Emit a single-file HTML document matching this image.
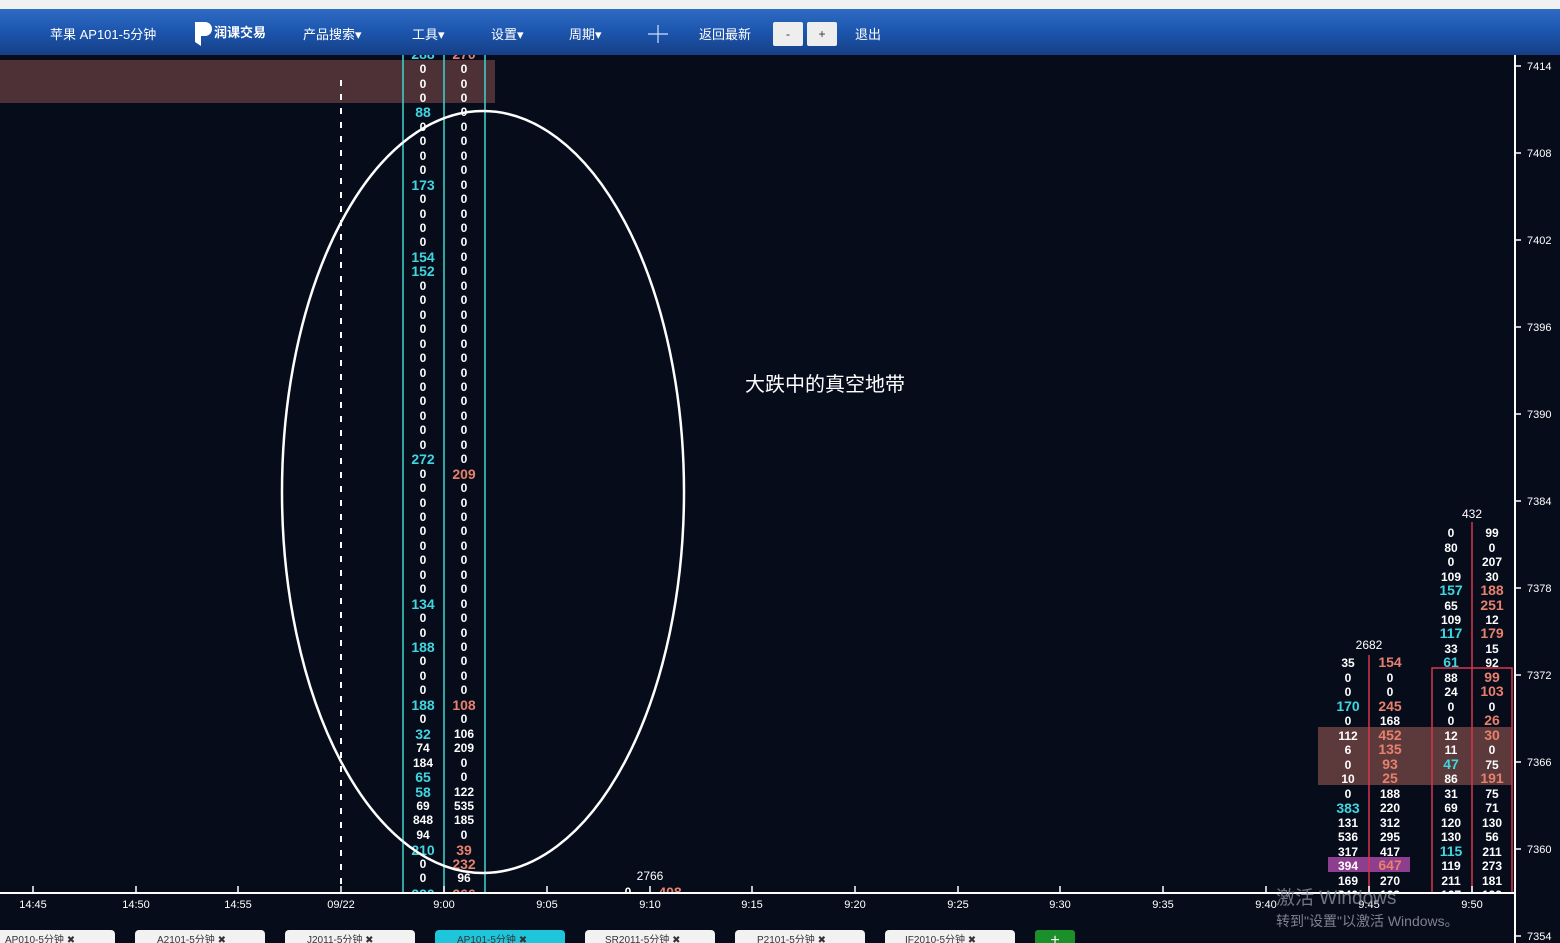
<!DOCTYPE html>
<html><head><meta charset="utf-8"><style>
*{margin:0;padding:0}
body{width:1560px;height:943px;overflow:hidden;background:#070c1b;font-family:"Liberation Sans","Noto Sans CJK SC",sans-serif}
svg{display:block}
.w{fill:#fff;font-size:12px;font-weight:bold;text-anchor:middle}
.c{fill:#3fd6e0;font-size:14px;font-weight:bold;text-anchor:middle}
.r{fill:#e8806c;font-size:14px;font-weight:bold;text-anchor:middle}
.t{fill:#fff;font-size:11px;text-anchor:middle}
.p{fill:#fff;font-size:11px}
.m{fill:#fff;font-size:13px}
</style></head><body>
<svg width="1560" height="943" xmlns="http://www.w3.org/2000/svg">
<defs><linearGradient id="g" x1="0" y1="0" x2="0" y2="1"><stop offset="0" stop-color="#2f6cc4"/><stop offset="0.5" stop-color="#1c55ad"/><stop offset="1" stop-color="#163f86"/></linearGradient></defs>

<rect x="0" y="60" width="495" height="43" fill="#4d3136"/>
<rect x="1318" y="727" width="194" height="58" fill="#7a4a48" opacity="0.75"/>
<rect x="1328" y="857" width="82" height="15" fill="#8e3e8e"/>
<line x1="341" y1="80" x2="341" y2="893" stroke="#fff" stroke-width="2" stroke-dasharray="6,8"/>
<g stroke="#3fd6d0" stroke-width="1.5"><line x1="403" y1="55" x2="403" y2="893"/><line x1="444" y1="55" x2="444" y2="893"/><line x1="485" y1="55" x2="485" y2="893"/></g>
<g stroke="#d8344a" stroke-width="1.5" fill="none"><line x1="1369" y1="655" x2="1369" y2="893"/><line x1="1472" y1="522" x2="1472" y2="893"/><rect x="1432" y="668" width="80" height="225"/></g>

<g transform="translate(0,1)">
<text class="c" x="423" y="58">288</text><text class="r" x="464" y="58">270</text>
<text class="w" x="423" y="72">0</text><text class="w" x="464" y="72">0</text>
<text class="w" x="423" y="87">0</text><text class="w" x="464" y="87">0</text>
<text class="w" x="423" y="101">0</text><text class="w" x="464" y="101">0</text>
<text class="c" x="423" y="116">88</text><text class="w" x="464" y="115">0</text>
<text class="w" x="423" y="130">0</text><text class="w" x="464" y="130">0</text>
<text class="w" x="423" y="144">0</text><text class="w" x="464" y="144">0</text>
<text class="w" x="423" y="159">0</text><text class="w" x="464" y="159">0</text>
<text class="w" x="423" y="173">0</text><text class="w" x="464" y="173">0</text>
<text class="c" x="423" y="189">173</text><text class="w" x="464" y="188">0</text>
<text class="w" x="423" y="202">0</text><text class="w" x="464" y="202">0</text>
<text class="w" x="423" y="217">0</text><text class="w" x="464" y="217">0</text>
<text class="w" x="423" y="231">0</text><text class="w" x="464" y="231">0</text>
<text class="w" x="423" y="245">0</text><text class="w" x="464" y="245">0</text>
<text class="c" x="423" y="261">154</text><text class="w" x="464" y="260">0</text>
<text class="c" x="423" y="275">152</text><text class="w" x="464" y="274">0</text>
<text class="w" x="423" y="289">0</text><text class="w" x="464" y="289">0</text>
<text class="w" x="423" y="303">0</text><text class="w" x="464" y="303">0</text>
<text class="w" x="423" y="318">0</text><text class="w" x="464" y="318">0</text>
<text class="w" x="423" y="332">0</text><text class="w" x="464" y="332">0</text>
<text class="w" x="423" y="347">0</text><text class="w" x="464" y="347">0</text>
<text class="w" x="423" y="361">0</text><text class="w" x="464" y="361">0</text>
<text class="w" x="423" y="376">0</text><text class="w" x="464" y="376">0</text>
<text class="w" x="423" y="390">0</text><text class="w" x="464" y="390">0</text>
<text class="w" x="423" y="404">0</text><text class="w" x="464" y="404">0</text>
<text class="w" x="423" y="419">0</text><text class="w" x="464" y="419">0</text>
<text class="w" x="423" y="433">0</text><text class="w" x="464" y="433">0</text>
<text class="w" x="423" y="448">0</text><text class="w" x="464" y="448">0</text>
<text class="c" x="423" y="463">272</text><text class="w" x="464" y="462">0</text>
<text class="w" x="423" y="477">0</text><text class="r" x="464" y="478">209</text>
<text class="w" x="423" y="491">0</text><text class="w" x="464" y="491">0</text>
<text class="w" x="423" y="506">0</text><text class="w" x="464" y="506">0</text>
<text class="w" x="423" y="520">0</text><text class="w" x="464" y="520">0</text>
<text class="w" x="423" y="534">0</text><text class="w" x="464" y="534">0</text>
<text class="w" x="423" y="549">0</text><text class="w" x="464" y="549">0</text>
<text class="w" x="423" y="563">0</text><text class="w" x="464" y="563">0</text>
<text class="w" x="423" y="578">0</text><text class="w" x="464" y="578">0</text>
<text class="w" x="423" y="592">0</text><text class="w" x="464" y="592">0</text>
<text class="c" x="423" y="608">134</text><text class="w" x="464" y="607">0</text>
<text class="w" x="423" y="621">0</text><text class="w" x="464" y="621">0</text>
<text class="w" x="423" y="636">0</text><text class="w" x="464" y="636">0</text>
<text class="c" x="423" y="651">188</text><text class="w" x="464" y="650">0</text>
<text class="w" x="423" y="664">0</text><text class="w" x="464" y="664">0</text>
<text class="w" x="423" y="679">0</text><text class="w" x="464" y="679">0</text>
<text class="w" x="423" y="693">0</text><text class="w" x="464" y="693">0</text>
<text class="c" x="423" y="709">188</text><text class="r" x="464" y="709">108</text>
<text class="w" x="423" y="722">0</text><text class="w" x="464" y="722">0</text>
<text class="c" x="423" y="738">32</text><text class="w" x="464" y="737">106</text>
<text class="w" x="423" y="751">74</text><text class="w" x="464" y="751">209</text>
<text class="w" x="423" y="766">184</text><text class="w" x="464" y="766">0</text>
<text class="c" x="423" y="781">65</text><text class="w" x="464" y="780">0</text>
<text class="c" x="423" y="796">58</text><text class="w" x="464" y="795">122</text>
<text class="w" x="423" y="809">69</text><text class="w" x="464" y="809">535</text>
<text class="w" x="423" y="823">848</text><text class="w" x="464" y="823">185</text>
<text class="w" x="423" y="838">94</text><text class="w" x="464" y="838">0</text>
<text class="c" x="423" y="854">210</text><text class="r" x="464" y="854">39</text>
<text class="w" x="423" y="867">0</text><text class="r" x="464" y="868">232</text>
<text class="w" x="423" y="881">0</text><text class="w" x="464" y="881">96</text>
<text class="c" x="423" y="898">220</text><text class="r" x="464" y="898">266</text>
</g>

<ellipse cx="483" cy="492" rx="201" ry="381" fill="none" stroke="#fff" stroke-width="2.5"/>
<text x="745" y="391" fill="#fff" font-size="20">大跌中的真空地带</text>
<text class="w" x="650" y="880" style="font-weight:normal">2766</text>
<text class="w" x="628" y="896">0</text><text class="r" x="670" y="897">408</text>

<text class="w" x="1369" y="649" style="font-weight:normal">2682</text>
<g transform="translate(0,1)">
<text class="w" x="1348" y="666">35</text><text class="r" x="1390" y="666">154</text>
<text class="w" x="1348" y="681">0</text><text class="w" x="1390" y="681">0</text>
<text class="w" x="1348" y="695">0</text><text class="w" x="1390" y="695">0</text>
<text class="c" x="1348" y="710">170</text><text class="r" x="1390" y="710">245</text>
<text class="w" x="1348" y="724">0</text><text class="w" x="1390" y="724">168</text>
<text class="w" x="1348" y="739">112</text><text class="r" x="1390" y="739">452</text>
<text class="w" x="1348" y="753">6</text><text class="r" x="1390" y="753">135</text>
<text class="w" x="1348" y="768">0</text><text class="r" x="1390" y="768">93</text>
<text class="w" x="1348" y="782">10</text><text class="r" x="1390" y="782">25</text>
<text class="w" x="1348" y="797">0</text><text class="w" x="1390" y="797">188</text>
<text class="c" x="1348" y="812">383</text><text class="w" x="1390" y="811">220</text>
<text class="w" x="1348" y="826">131</text><text class="w" x="1390" y="826">312</text>
<text class="w" x="1348" y="840">536</text><text class="w" x="1390" y="840">295</text>
<text class="w" x="1348" y="855">317</text><text class="w" x="1390" y="855">417</text>
<text class="w" x="1348" y="869">394</text><text class="r" x="1390" y="869">647</text>
<text class="w" x="1348" y="884">169</text><text class="w" x="1390" y="884">270</text>
<text class="w" x="1348" y="898">240</text><text class="w" x="1390" y="898">163</text>
</g>
<text class="w" x="1472" y="518" style="font-weight:normal">432</text>
<g transform="translate(0,1)">
<text class="w" x="1451" y="536">0</text><text class="w" x="1492" y="536">99</text>
<text class="w" x="1451" y="551">80</text><text class="w" x="1492" y="551">0</text>
<text class="w" x="1451" y="565">0</text><text class="w" x="1492" y="565">207</text>
<text class="w" x="1451" y="580">109</text><text class="w" x="1492" y="580">30</text>
<text class="c" x="1451" y="594">157</text><text class="r" x="1492" y="594">188</text>
<text class="w" x="1451" y="609">65</text><text class="r" x="1492" y="609">251</text>
<text class="w" x="1451" y="623">109</text><text class="w" x="1492" y="623">12</text>
<text class="c" x="1451" y="637">117</text><text class="r" x="1492" y="637">179</text>
<text class="w" x="1451" y="652">33</text><text class="w" x="1492" y="652">15</text>
<text class="c" x="1451" y="666">61</text><text class="w" x="1492" y="666">92</text>
<text class="w" x="1451" y="681">88</text><text class="r" x="1492" y="681">99</text>
<text class="w" x="1451" y="695">24</text><text class="r" x="1492" y="695">103</text>
<text class="w" x="1451" y="710">0</text><text class="w" x="1492" y="710">0</text>
<text class="w" x="1451" y="724">0</text><text class="r" x="1492" y="724">26</text>
<text class="w" x="1451" y="739">12</text><text class="r" x="1492" y="739">30</text>
<text class="w" x="1451" y="753">11</text><text class="w" x="1492" y="753">0</text>
<text class="c" x="1451" y="768">47</text><text class="w" x="1492" y="768">75</text>
<text class="w" x="1451" y="782">86</text><text class="r" x="1492" y="782">191</text>
<text class="w" x="1451" y="797">31</text><text class="w" x="1492" y="797">75</text>
<text class="w" x="1451" y="811">69</text><text class="w" x="1492" y="811">71</text>
<text class="w" x="1451" y="826">120</text><text class="w" x="1492" y="826">130</text>
<text class="w" x="1451" y="840">130</text><text class="w" x="1492" y="840">56</text>
<text class="c" x="1451" y="855">115</text><text class="w" x="1492" y="855">211</text>
<text class="w" x="1451" y="869">119</text><text class="w" x="1492" y="869">273</text>
<text class="w" x="1451" y="884">211</text><text class="w" x="1492" y="884">181</text>
<text class="w" x="1451" y="898">167</text><text class="w" x="1492" y="898">199</text>
</g>

<rect x="0" y="0" width="1560" height="9" fill="#f1f1f1"/>
<rect x="0" y="9" width="1560" height="46" fill="url(#g)"/>
<text class="m" x="50" y="39">苹果 AP101-5分钟</text>
<path d="M195 22 h10 a7 7 0 0 1 0 14 h-4 v10 l-6 -4z" fill="#fff"/>
<text x="214" y="37" fill="#fff" font-size="13" font-weight="bold">润课交易</text>
<text class="m" x="303" y="39">产品搜索▾</text>
<text class="m" x="412" y="39">工具▾</text>
<text class="m" x="491" y="39">设置▾</text>
<text class="m" x="569" y="39">周期▾</text>
<path d="M648 34h20M658 25v18" stroke="#cfe0ff" stroke-width="1.2"/>
<text class="m" x="699" y="39">返回最新</text>
<rect x="773" y="22" width="30" height="24" rx="2" fill="#eee"/><text x="788" y="38" fill="#333" font-size="12" text-anchor="middle">-</text>
<rect x="807" y="22" width="30" height="24" rx="2" fill="#eee"/><text x="822" y="38" fill="#333" font-size="12" text-anchor="middle">+</text>
<text class="m" x="855" y="39">退出</text>

<rect x="0" y="894" width="1514" height="49" fill="#070c1b"/>
<line x1="0" y1="893" x2="1514" y2="893" stroke="#fff" stroke-width="2"/>
<line x1="1515" y1="55" x2="1515" y2="943" stroke="#fff" stroke-width="2"/>
<g stroke="#fff" stroke-width="1.5">
<line x1="33" y1="886" x2="33" y2="893"/><line x1="136" y1="886" x2="136" y2="893"/><line x1="238" y1="886" x2="238" y2="893"/><line x1="341" y1="886" x2="341" y2="893"/><line x1="444" y1="886" x2="444" y2="893"/><line x1="547" y1="886" x2="547" y2="893"/><line x1="650" y1="886" x2="650" y2="893"/><line x1="752" y1="886" x2="752" y2="893"/><line x1="855" y1="886" x2="855" y2="893"/><line x1="958" y1="886" x2="958" y2="893"/><line x1="1060" y1="886" x2="1060" y2="893"/><line x1="1163" y1="886" x2="1163" y2="893"/><line x1="1266" y1="886" x2="1266" y2="893"/><line x1="1369" y1="886" x2="1369" y2="893"/><line x1="1472" y1="886" x2="1472" y2="893"/>
<line x1="1515" y1="66" x2="1521" y2="66"/><line x1="1515" y1="153" x2="1521" y2="153"/><line x1="1515" y1="240" x2="1521" y2="240"/><line x1="1515" y1="327" x2="1521" y2="327"/><line x1="1515" y1="414" x2="1521" y2="414"/><line x1="1515" y1="501" x2="1521" y2="501"/><line x1="1515" y1="588" x2="1521" y2="588"/><line x1="1515" y1="675" x2="1521" y2="675"/><line x1="1515" y1="762" x2="1521" y2="762"/><line x1="1515" y1="849" x2="1521" y2="849"/><line x1="1515" y1="936" x2="1521" y2="936"/>
</g>
<g>
<text class="t" x="33" y="908">14:45</text><text class="t" x="136" y="908">14:50</text><text class="t" x="238" y="908">14:55</text><text class="t" x="341" y="908">09/22</text><text class="t" x="444" y="908">9:00</text><text class="t" x="547" y="908">9:05</text><text class="t" x="650" y="908">9:10</text><text class="t" x="752" y="908">9:15</text><text class="t" x="855" y="908">9:20</text><text class="t" x="958" y="908">9:25</text><text class="t" x="1060" y="908">9:30</text><text class="t" x="1163" y="908">9:35</text><text class="t" x="1266" y="908">9:40</text><text class="t" x="1369" y="908">9:45</text><text class="t" x="1472" y="908">9:50</text>
</g>
<g>
<text class="p" x="1527" y="70">7414</text><text class="p" x="1527" y="157">7408</text><text class="p" x="1527" y="244">7402</text><text class="p" x="1527" y="331">7396</text><text class="p" x="1527" y="418">7390</text><text class="p" x="1527" y="505">7384</text><text class="p" x="1527" y="592">7378</text><text class="p" x="1527" y="679">7372</text><text class="p" x="1527" y="766">7366</text><text class="p" x="1527" y="853">7360</text><text class="p" x="1527" y="940">7354</text>
</g>
<text x="1276" y="904" fill="#8a8f99" font-size="19" opacity="0.8">激活 Windows</text>
<text x="1276" y="926" fill="#8a8f99" font-size="14" opacity="0.9">转到"设置"以激活 Windows。</text>

<g font-size="10" fill="#333">
<rect x="-15" y="930" width="130" height="20" rx="4" fill="#f2f2f2"/><text x="5" y="943">AP010-5分钟 ✖</text>
<rect x="135" y="930" width="130" height="20" rx="4" fill="#f2f2f2"/><text x="157" y="943">A2101-5分钟 ✖</text>
<rect x="285" y="930" width="130" height="20" rx="4" fill="#f2f2f2"/><text x="307" y="943">J2011-5分钟 ✖</text>
<rect x="435" y="930" width="130" height="20" rx="4" fill="#1ec6dc"/><text x="457" y="943">AP101-5分钟 ✖</text>
<rect x="585" y="930" width="130" height="20" rx="4" fill="#f2f2f2"/><text x="605" y="943">SR2011-5分钟 ✖</text>
<rect x="735" y="930" width="130" height="20" rx="4" fill="#f2f2f2"/><text x="757" y="943">P2101-5分钟 ✖</text>
<rect x="885" y="930" width="130" height="20" rx="4" fill="#f2f2f2"/><text x="905" y="943">IF2010-5分钟 ✖</text>
<rect x="1035" y="930" width="40" height="20" rx="3" fill="#1a8f2a"/><text x="1055" y="945" fill="#fff" font-size="16" text-anchor="middle">+</text>
</g>
</svg>
</body></html>
